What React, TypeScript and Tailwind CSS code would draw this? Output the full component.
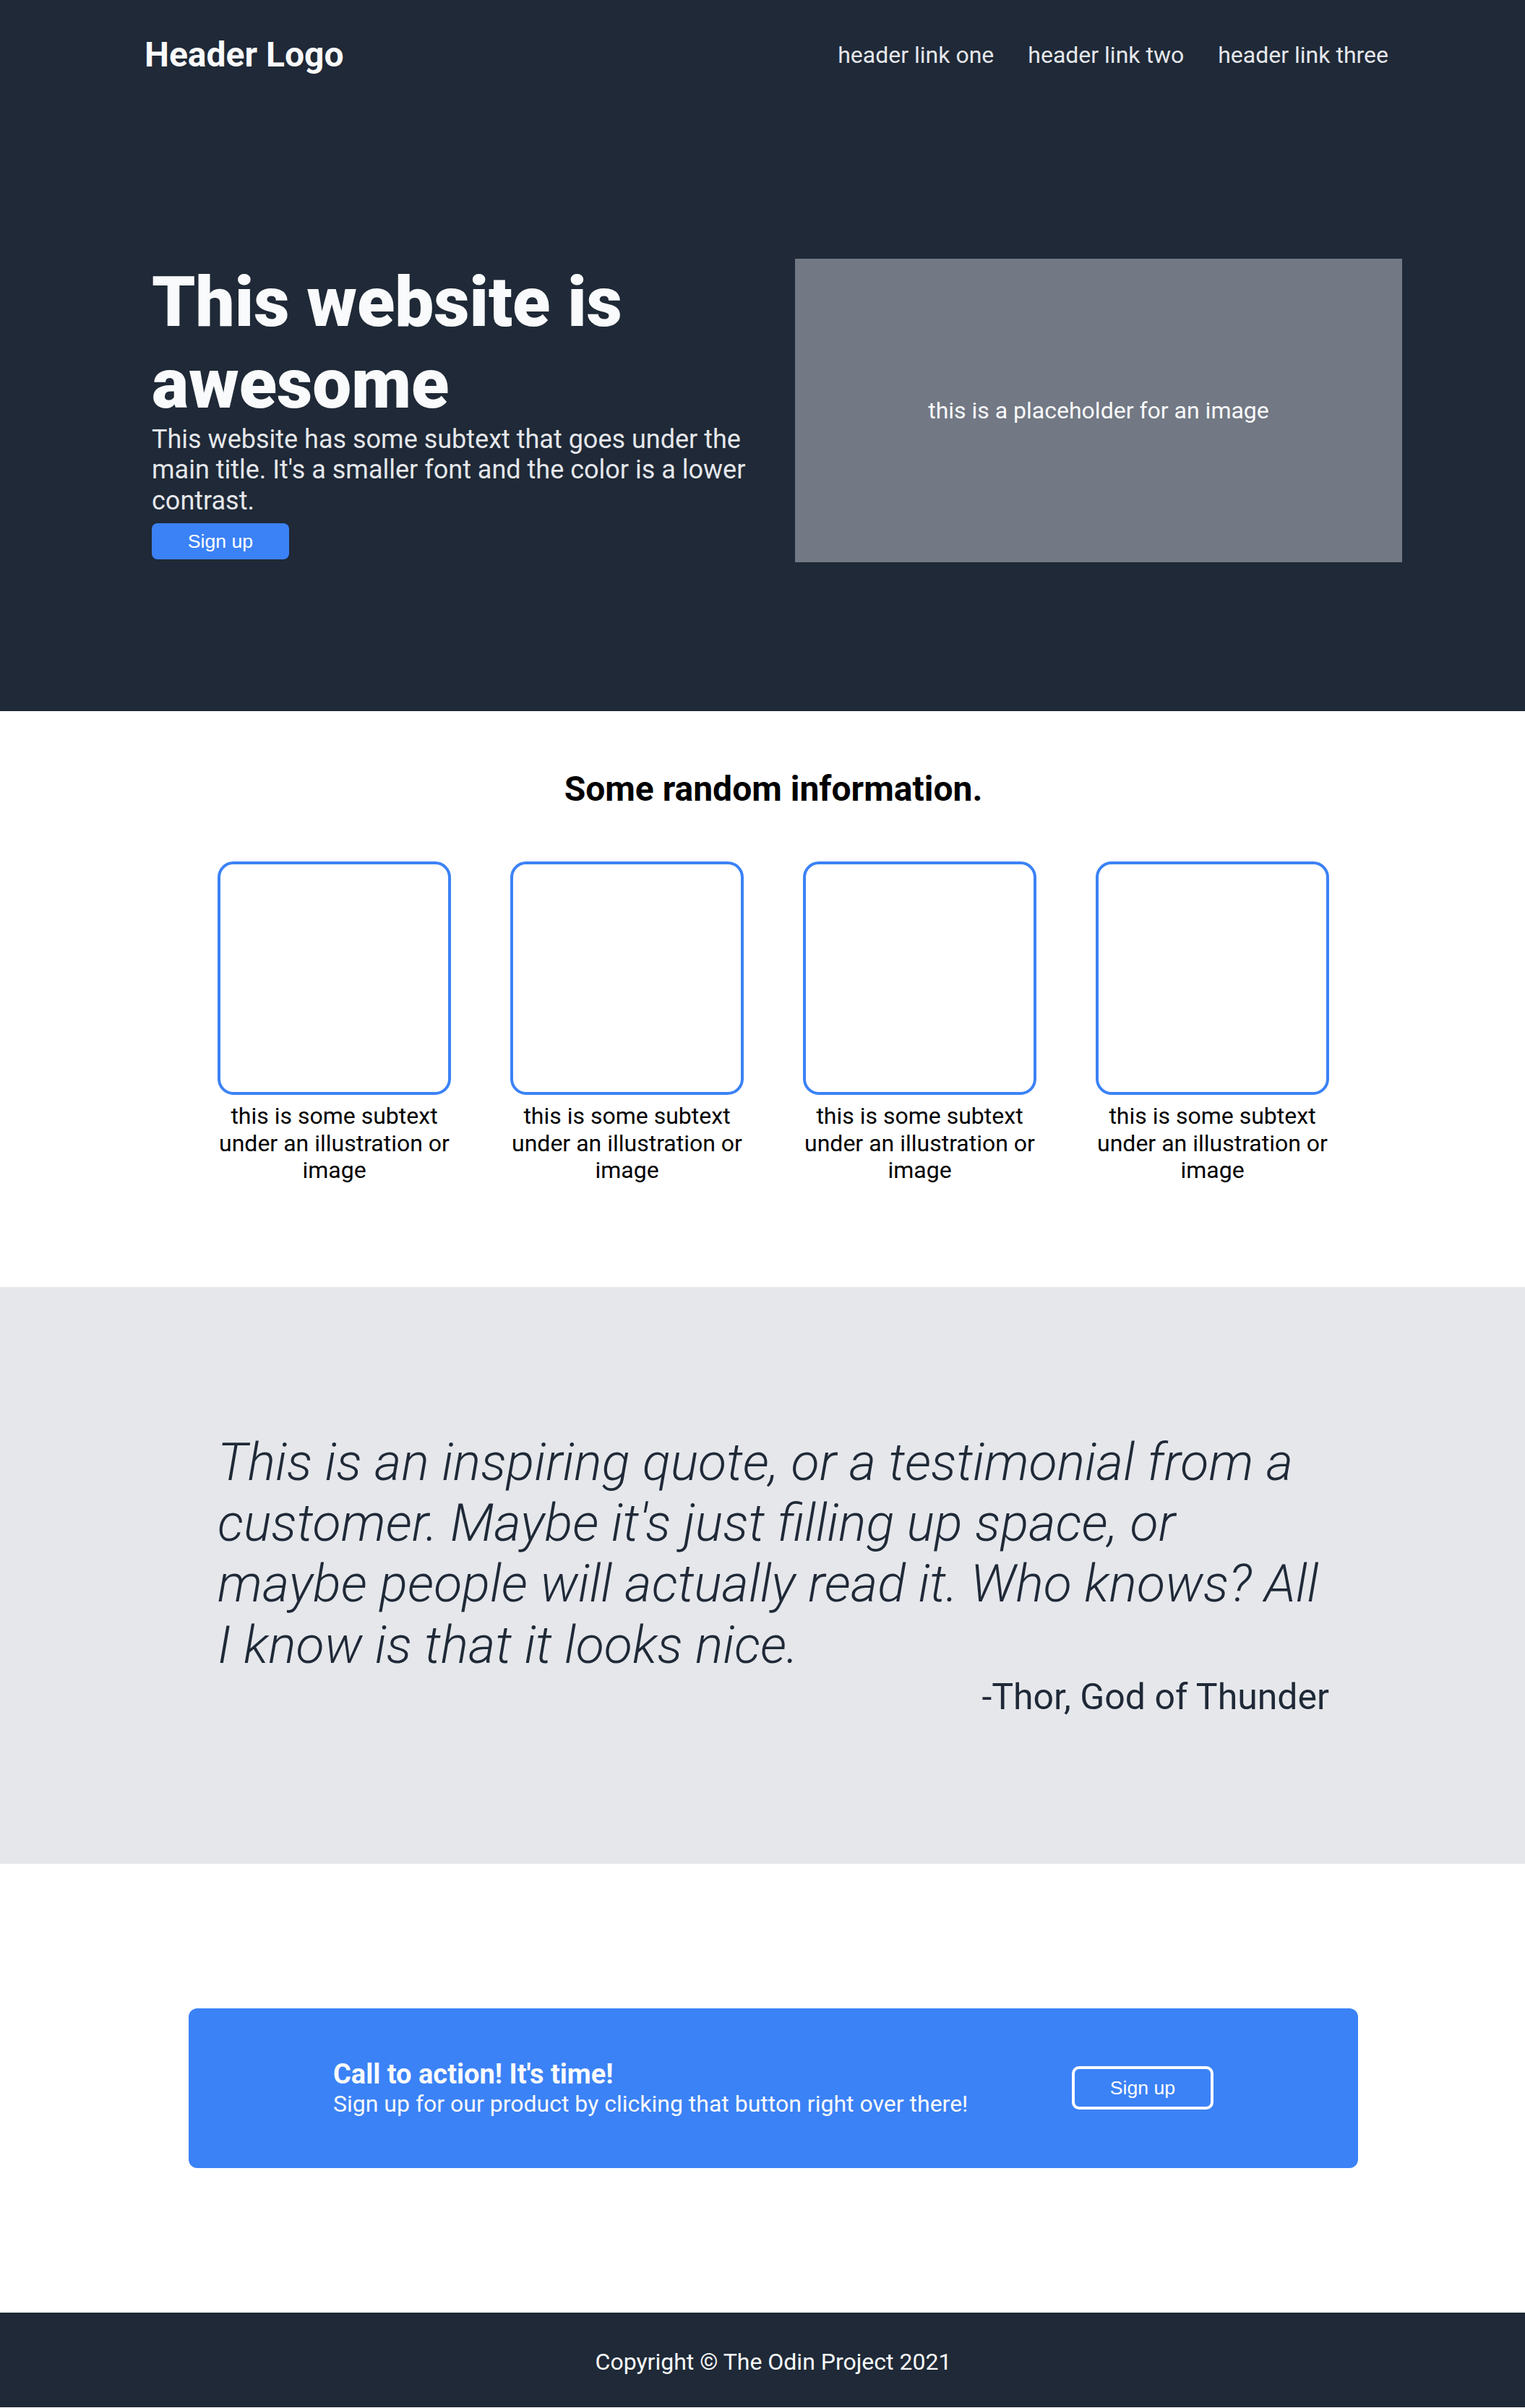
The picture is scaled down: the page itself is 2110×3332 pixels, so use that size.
import React from 'react';

const cards = [1, 2, 3, 4];

export default function App() {
  return (
    <div className="font-['Roboto',sans-serif] bg-white">
      {/* Top: header + hero */}
      <div className="bg-[#1f2937] h-[984px] flex flex-col pl-[30px]">
        <header className="mx-auto w-[1740px] py-[48px] flex items-center justify-between">
          <div className="text-[48px] font-bold text-[#f9fafb] leading-[56px]">Header Logo</div>
          <nav className="flex gap-[47px] pr-[19px] text-[32px] text-[#e5e7eb]">
            <a href="#">header link one</a>
            <a href="#">header link two</a>
            <a href="#">header link three</a>
          </nav>
        </header>

        <div className="flex-1 flex items-center">
          <div className="mx-auto w-[1740px] pl-[10px] flex items-center justify-between">
            <div className="w-[840px] flex flex-col items-start">
              <h1 className="text-[96px] font-black text-[#f9fafb] leading-[1.172]">This website is awesome</h1>
              <p className="text-[36px] text-[#e5e7eb] leading-[1.172]">
                This website has some subtext that goes under the main title. It's a smaller font and the color is a lower contrast.
              </p>
              <button className="mt-[10px] w-[190px] h-[50px] rounded-[8px] bg-[#3b82f6] text-white text-[26.67px] font-['Liberation_Sans',Arial,sans-serif]">
                Sign up
              </button>
            </div>
            <div className="w-[840px] h-[420px] bg-[#727884] flex items-center justify-center text-[32px] text-[#f9fafb]">
              this is a placeholder for an image
            </div>
          </div>
        </div>
      </div>

      {/* Info section */}
      <section className="pl-[30px] pt-[80px] pb-[142px]">
        <h2 className="text-center text-[48px] font-bold text-black leading-[56px]">Some random information.</h2>
        <div className="mx-auto mt-[72px] flex justify-center gap-[82px]">
          {cards.map((c) => (
            <div key={c} className="w-[323px] flex flex-col">
              <div className="h-[323px] border-4 border-[#3b82f6] rounded-[22px]" />
              <p className="mt-[11px] text-center text-[32px] text-black leading-[1.172]">
                this is some subtext under an illustration or image
              </p>
            </div>
          ))}
        </div>
      </section>

      {/* Quote */}
      <section className="bg-[#e5e7eb] pl-[30px] pt-[201px] pb-[201px]">
        <div className="mx-auto w-[1538px] text-[#1f2937]">
          <p className="text-[72px] font-light italic leading-[1.172]">
            This is an inspiring quote, or a testimonial from a customer. Maybe it's just filling up space, or maybe people will actually read it. Who knows? All I know is that it looks nice.
          </p>
          <p className="text-right text-[50px] leading-[1.172]">-Thor, God of Thunder</p>
        </div>
      </section>

      {/* Call to action */}
      <section className="pl-[30px] py-[200px]">
        <div className="mx-auto w-[1618px] h-[221px] rounded-[12px] bg-[#3b82f6] px-[200px] flex items-center justify-between">
          <div className="text-[#f9fafb]">
            <div className="text-[38px] font-bold leading-[1.172]">Call to action! It's time!</div>
            <div className="text-[32px] leading-[1.172]">Sign up for our product by clicking that button right over there!</div>
          </div>
          <button className="w-[196px] h-[60px] border-4 border-white rounded-[10px] text-white text-[26.67px] font-['Liberation_Sans',Arial,sans-serif]">
            Sign up
          </button>
        </div>
      </section>

      {/* Footer */}
      <footer className="bg-[#1f2937] pl-[30px] pt-[50px] pb-[44px]">
        <p className="text-center text-[32px] text-[#f9fafb] leading-[1.172]">Copyright © The Odin Project 2021</p>
      </footer>
    </div>
  );
}
